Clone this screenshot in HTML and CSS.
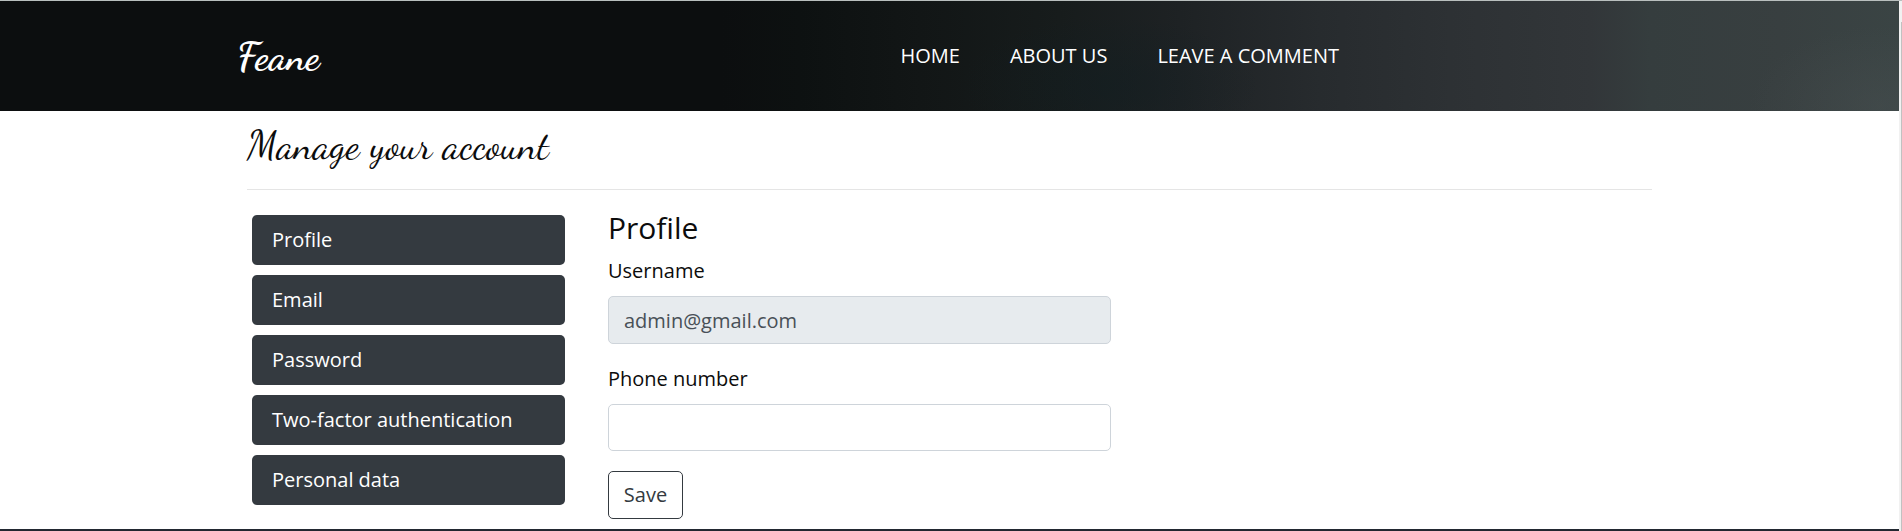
FILE: index.html
```html
<!DOCTYPE html>
<html lang="en">
<head>
<meta charset="utf-8">
<title>Feane - Manage your account</title>
<link rel="stylesheet" href="styles.css">
</head>
<body>
<div class="page">
  <header class="header">
    <a class="brand">Feane</a>
    <nav class="nav">
      <a class="nav-link">Home</a>
      <a class="nav-link">About us</a>
      <a class="nav-link">Leave a comment</a>
    </nav>
  </header>
  <main class="container">
    <h2 class="title">Manage your account</h2>
    <div class="row">
      <ul class="side">
        <li class="side-item">Profile</li>
        <li class="side-item">Email</li>
        <li class="side-item">Password</li>
        <li class="side-item">Two-factor authentication</li>
        <li class="side-item">Personal data</li>
      </ul>
      <form class="form">
        <h4 class="form-title">Profile</h4>
        <label class="label" for="user">Username</label>
        <input class="input input-user" id="user" value="admin@gmail.com" disabled>
        <label class="label" for="phone">Phone number</label>
        <input class="input input-phone" id="phone">
        <button class="save" type="button">Save</button>
      </form>
    </div>
  </main>
  <footer class="footer"></footer>
</div>
<div class="scrollbar"><div class="thumb"></div></div>
</body>
</html>
```
FILE: styles.css
```css
* { box-sizing: border-box; }
body {
  margin: 0;
  height: 531px;
  display: flex;
  overflow: hidden;
  border-top: 1px solid #b9bfbe;
  background: #fff;
  color: #0c0c0c;
  font: 20px/30px "Open Sans", sans-serif;
}
.page { width: 1899px; display: flex; flex-direction: column; }
.header {
  height: 110px;
  flex: none;
  display: flex;
  align-items: center;
  padding-left: 237px;
  background:
    radial-gradient(ellipse 130px 80px at 1880px 105px, rgba(80, 86, 88, .3), transparent),
    radial-gradient(ellipse 150px 70px at 1110px 85px, rgba(16, 30, 34, .45), transparent),
    linear-gradient(90deg, #0c0e0f 0, #0c0e0f 720px, #0d1111 800px, #121616 920px, #171c1c 1060px, #1e2224 1180px, #272b2e 1320px, #2d3134 1450px, #323639 1590px, #353d3e 1650px, #383f40 1780px, #3a4444 1899px);
}
.brand {
  width: 663.5px;
  color: #fff;
  font: bold 40px/48px "Dancing Script", "Liberation Serif", cursive;
}
.nav { display: flex; gap: 50px; }
.nav-link { color: #fff; text-transform: uppercase; white-space: nowrap; }
.container { width: 1405px; margin-left: 247px; padding-top: 1px; flex: 1; }
.title {
  margin: 0 0 20px;
  height: 78px;
  padding-top: 9px;
  border-bottom: 1px solid #e5e5e5;
  font: 400 40px/48px "Dancing Script", "Liberation Serif", cursive;
  letter-spacing: .12px;
}
.row { display: flex; }
.side {
  list-style: none;
  margin: 5px 43px 0 5px;
  padding: 0;
  width: 313px;
  display: flex;
  flex-direction: column;
  gap: 10px;
}
.side-item { height: 50px; padding: 10px 20px; border-radius: 5px; background: #343a40; color: #fff; }
.form { width: 503px; display: flex; flex-direction: column; }
.form-title { margin: 0 0 10px; font-size: 30px; font-weight: 400; line-height: 36px; }
.label { margin-bottom: 10px; }
.input {
  width: 100%;
  margin: 0 0 20px;
  padding: 7px 15px;
  border: 1px solid #ced4da;
  border-radius: 5px;
  background: #fff;
  color: #495057;
  font: inherit;
}
.input-user { height: 48px; background: #e7ebee; }
.input-phone { height: 47px; }
.save {
  width: 75px;
  height: 48px;
  padding: 0;
  border: 1px solid #343a40;
  border-radius: 5px;
  background: #fff;
  color: #343a40;
  font: inherit;
}
.footer { height: 2px; flex: none; background: #222831; }
.scrollbar { width: 3px; padding: 21px 0 0 2px; background: #f1f1f1; }
.thumb { height: 100%; background: #c1c1c1; }
```
